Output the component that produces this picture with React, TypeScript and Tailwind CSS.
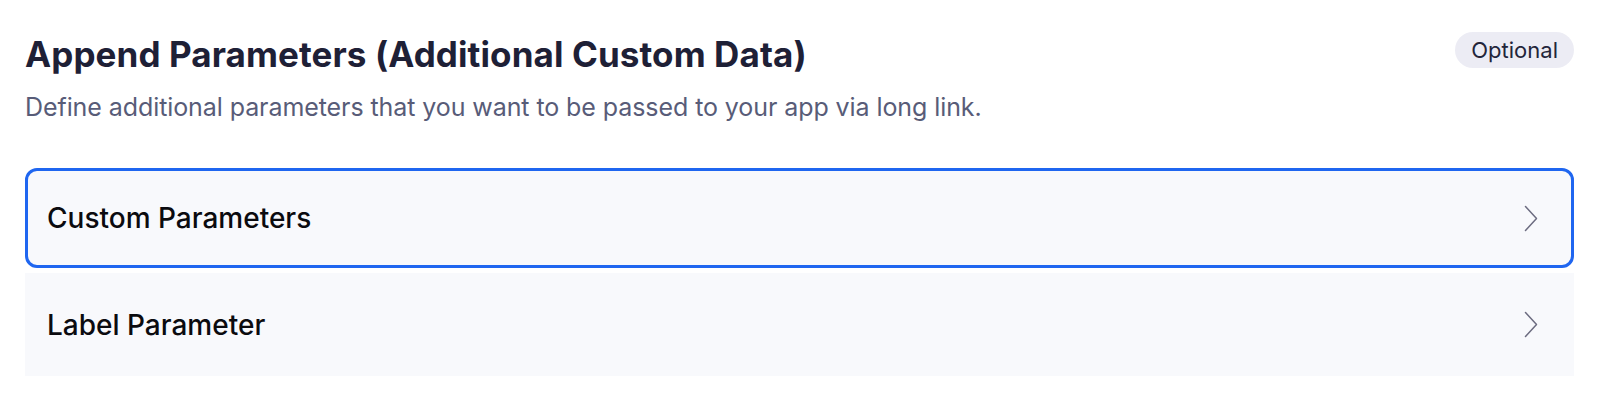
// ── AppendParameters ─────────────────────────────────────────
// Section header plus a list of expandable parameter groups.

const rows = [
  { id: "custom", label: "Custom Parameters", active: true },
  { id: "label", label: "Label Parameter", active: false },
];

function Chevron() {
  return (
    <svg width="14" height="27" viewBox="0 0 14 27" fill="none" className="text-[#6c6c80]">
      <path d="M1.5 1.5 L12.5 13.5 L1.5 25.5" stroke="currentColor" strokeWidth="1.5" strokeLinecap="round" strokeLinejoin="round" />
    </svg>
  );
}

export default function App() {
  return (
    <div
      className="min-h-[405px] bg-white pl-[25px] pr-[26px] pt-[34px]"
      style={{ fontFamily: "Inter, 'Noto Sans', sans-serif" }}
    >
      <div className="flex items-start justify-between">
        <div>
          <h1 className="text-[35px] font-bold leading-[41px] tracking-[0.1px] text-[#1e2036]">
            Append Parameters (Additional Custom Data)
          </h1>
          <p className="mt-[16px] text-[25px] leading-[32px] tracking-[-0.08px] text-[#585c78]">
            Define additional parameters that you want to be passed to your app via long link.
          </p>
        </div>
        <span className="mt-[-2px] inline-flex h-[36px] items-center rounded-full bg-[#ececf4] px-[16px] text-[22px] text-[#23253a]">
          Optional
        </span>
      </div>

      <div className="mt-[45px] flex flex-col gap-[5px]">
        {rows.map((r) => (
          <div
            key={r.id}
            className={`flex cursor-pointer items-center justify-between bg-[#f8f9fc] pl-[19px] pr-[33px] ${
              r.active
                ? "h-[100px] rounded-[12px] border-[3px] border-[#1f66f0]"
                : "h-[103px] border-[3px] border-transparent"
            }`}
          >
            <span className="text-[28px] font-medium text-[#0b0b0f]">{r.label}</span>
            <Chevron />
          </div>
        ))}
      </div>
    </div>
  );
}
